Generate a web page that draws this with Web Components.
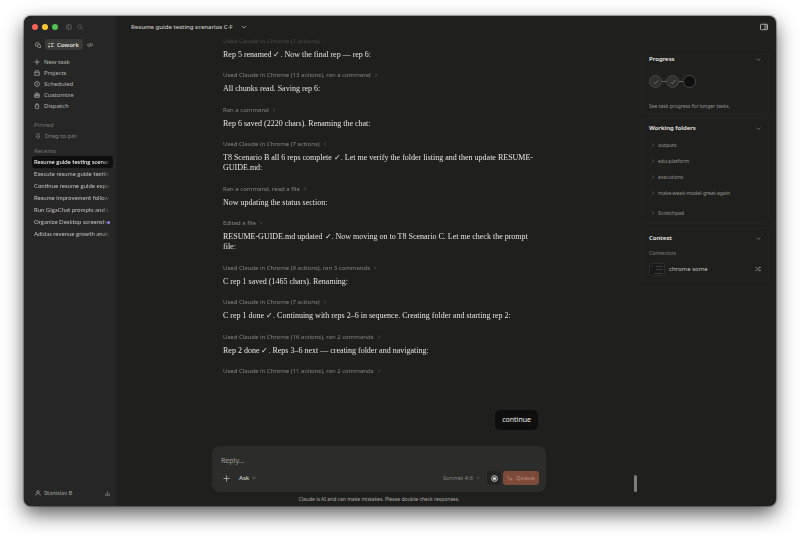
<!DOCTYPE html>
<html lang="en">
<head>
<meta charset="utf-8">
<meta name="viewport" content="width=device-width, initial-scale=1">
<title>Cowork</title>
<style>
    html, body {
        height: 100%;
        margin: 0;
    }
    body {
        box-sizing: border-box;
        padding: 16px 24px 32px;
        background: #fff;
        font-family: "Noto Sans", "Open Sans", sans-serif;
        font-size: 6px;
        line-height: 10px;
        color: #b8b6b0;
        overflow: hidden;
    }
</style>
</head>
<body>
<app-window>
    <side-bar slot="side">
        <nav-item icon="plus">New task</nav-item>
        <nav-item icon="box">Projects</nav-item>
        <nav-item icon="clock">Scheduled</nav-item>
        <nav-item icon="tools">Customize</nav-item>
        <nav-item icon="phone">Dispatch</nav-item>
        <recent-item slot="recents" active>Resume guide testing scenarios C-F</recent-item>
        <recent-item slot="recents">Execute resume guide testing</recent-item>
        <recent-item slot="recents">Continue resume guide experiments</recent-item>
        <recent-item slot="recents">Resume improvement follow-up</recent-item>
        <recent-item slot="recents">Run GigaChat prompts and save</recent-item>
        <recent-item slot="recents" unread>Organize Desktop screenshots</recent-item>
        <recent-item slot="recents">Adidas revenue growth analysis</recent-item>
    </side-bar>
    <title-bar slot="title">Resume guide testing scenarios C-F</title-bar>
    <chat-log>
        <chat-step action="Used Claude in Chrome (7 actions)">Rep 5 renamed ✓. Now the final rep — rep 6:</chat-step>
        <chat-step action="Used Claude in Chrome (13 actions), ran a command">All chunks read. Saving rep 6:</chat-step>
        <chat-step action="Ran a command">Rep 6 saved (2220 chars). Renaming the chat:</chat-step>
        <chat-step action="Used Claude in Chrome (7 actions)">T8 Scenario B all 6 reps complete ✓. Let me verify the folder listing and then update RESUME-GUIDE.md:</chat-step>
        <chat-step action="Ran a command, read a file">Now updating the status section:</chat-step>
        <chat-step action="Edited a file">RESUME-GUIDE.md updated ✓. Now moving on to T8 Scenario C. Let me check the prompt file:</chat-step>
        <chat-step action="Used Claude in Chrome (9 actions), ran 3 commands">C rep 1 saved (1465 chars). Renaming:</chat-step>
        <chat-step action="Used Claude in Chrome (7 actions)">C rep 1 done ✓. Continuing with reps 2–6 in sequence. Creating folder and starting rep 2:</chat-step>
        <chat-step action="Used Claude in Chrome (16 actions), ran 2 commands">Rep 2 done ✓. Reps 3–6 next — creating folder and navigating:</chat-step>
        <chat-step action="Used Claude in Chrome (11 actions), ran 2 commands"></chat-step>
        <span slot="reply">continue</span>
    </chat-log>
    <chat-composer></chat-composer>
    <info-panel slot="aside">
        <info-card heading="Progress"><progress-steps></progress-steps></info-card>
        <info-card heading="Working folders">
            <folder-list>
                <folder-row>outputs</folder-row>
                <folder-row>edu-platform</folder-row>
                <folder-row>executions</folder-row>
                <folder-row>make-weak-model-great-again</folder-row>
                <folder-row slot="scratch">Scratchpad</folder-row>
            </folder-list>
        </info-card>
        <info-card heading="Context"><connector-row>chrome some</connector-row></info-card>
    </info-panel>
</app-window>

<script>
// Shared button reset, each shadow root needs its own copy
const RESET = `
    * { box-sizing: border-box; }
    button {
        font: inherit;
        color: inherit;
        background: none;
        border: 0;
        margin: 0;
        padding: 0;
        text-align: left;
    }
`;

// All icons are drawn on a 16 unit grid
const ICONS = {
    plus: '<path d="M8 1v14M1 8h14"/>',
    box: '<path d="M2 6h12v8H2zM3 6l1-4h8l1 4"/>',
    clock: '<circle cx="8" cy="8" r="6.5"/><path d="M8 4.5V8l2.5 1.5"/>',
    tools: '<path d="M2 6h12v8H2zM5 6V3h6v3M2 10h12M6 9v2M10 9v2"/>',
    phone: '<rect x="3.5" y="4" width="9" height="11" rx="2"/><path d="M6 1.5h4M6.5 7.5h3"/>',
    pin: '<path d="M5 2h6v5l2 4H3l2-4zM6 14h4"/>',
    chats: '<path d="M4 10.5 1.5 11V6A4.5 4.5 0 0 1 6 1.5h1A4 4 0 0 1 11 5"/><path d="M10 6.5h1a3.8 3.8 0 0 1 3.5 4v4H10a4 4 0 0 1 0-8z"/>',
    tasks: '<path d="M1 4l1.5 1.5L5 2.5M8 4h7M8 12h7M8 8h5M1.5 10.5h3v3h-3z"/>',
    code: '<path d="M5 4 1 8l4 4M11 4l4 4-4 4M9.5 3l-3 10"/>',
    sidebar: '<rect x="1.5" y="2" width="13" height="12" rx="2"/><path d="M6 2v12"/>',
    search: '<circle cx="7" cy="7" r="5"/><path d="m11 11 4 4"/>',
    panel: '<rect x="1" y="2.5" width="14" height="11" rx="1.5"/><path d="M10 2.5v11M12 5.5h1.5M12 8h1.5M12 10.5h1.5"/>',
    down: '<path d="m2 5 6 6 6-6"/>',
    right: '<path d="m5 2 6 6-6 6"/>',
    user: '<circle cx="8" cy="5" r="3.5"/><path d="M2 15c0-3.5 2.5-6 6-6s6 2.5 6 6"/>',
    download: '<path d="M8 1.5V10M4.5 7 8 10.5 11.5 7M1.5 9v5h13V9"/>',
    stop: '<circle cx="8" cy="8" r="6.5"/><rect x="5" y="5" width="6" height="6" rx="1" fill="currentColor" stroke="none"/>',
    queue: '<path d="M3 1v6a4 4 0 0 0 4 4h7M10.5 7.5 14 11l-3.5 3.5"/>',
    check: '<path d="m2 9 4 4L14 3"/>',
    shuffle: '<path d="M1 4h3l6 8h5M1 12h3l6-8h5M12.5 1.5 15 4l-2.5 2.5M12.5 9.5 15 12l-2.5 2.5"/>'
};

// Helper: define an element with a static shadow template
function define(name, html, setup) {
    const template = document.createElement('template');
    template.innerHTML = html;
    customElements.define(name, class extends HTMLElement {
        constructor() {
            super();
            this.attachShadow({ mode: 'open' });
        }

        connectedCallback() {
            if (this.shadowRoot.firstChild) return;
            this.shadowRoot.appendChild(template.content.cloneNode(true));
            if (setup) setup(this, this.shadowRoot);
        }
    });
}

define('ui-icon', `
<style>
    :host {
        display: block;
        flex: none;
        width: 6px;
        height: 6px;
    }
    svg {
        display: block;
        width: 100%;
        height: 100%;
        fill: none;
        stroke: currentColor;
        stroke-width: 1.8;
    }
</style>
<svg viewBox="0 0 16 16" aria-hidden="true"></svg>
`, (el, root) => {
    root.querySelector('svg').innerHTML = ICONS[el.getAttribute('name')] || '';
});

define('app-window', `
<style>
    * { box-sizing: border-box; }
    :host {
        display: flex;
        height: 100%;
        border-radius: 7px;
        background: #1f1f1e;
        overflow: hidden;
        box-shadow: 0 0 1px 1px rgba(0, 0, 0, .35), 0 8px 20px rgba(0, 0, 0, .65);
    }
    .main {
        flex: 1;
        min-width: 0;
        display: flex;
        flex-direction: column;
    }
    .body {
        flex: 1;
        min-height: 0;
        display: flex;
    }
    .chat {
        flex: 1;
        min-width: 0;
        display: flex;
        flex-direction: column;
        align-items: center;
        position: relative;
    }
    /* overlay scrollbar */
    .thumb {
        position: absolute;
        right: 4px;
        bottom: 14px;
        width: 3px;
        height: 17px;
        border-radius: 2px;
        background: #7c7c7b;
    }
</style>
<slot name="side"></slot>
<div class="main">
    <slot name="title"></slot>
    <div class="body">
        <div class="chat"><slot></slot><div class="thumb"></div></div>
        <slot name="aside"></slot>
    </div>
</div>
`);

define('side-bar', `
<style>
    ${RESET}
    :host {
        display: flex;
        flex-direction: column;
        box-sizing: border-box;
        width: 93px;
        background: #262626;
        border-right: 1px solid #222221;
    }
    .lights {
        display: flex;
        align-items: center;
        gap: 4px;
        height: 22px;
        padding-left: 8px;
        color: #6b6b69;
    }
    .lights i {
        width: 6px;
        height: 6px;
        border-radius: 50%;
    }
    .red { background: #f9605a; }
    .yellow { background: #fbc934; }
    .green { background: #51c156; }
    .lights button + button { margin-left: 1px; }
    .lights i + button { margin-left: 4px; }
    .tabs {
        display: flex;
        align-items: center;
        gap: 4px;
        height: 13px;
        padding-left: 11px;
    }
    .tabs .on {
        display: flex;
        align-items: center;
        gap: 3px;
        height: 11px;
        padding: 0 4px 0 3px;
        border-radius: 3px;
        background: #3a3a39;
        color: #f0eee8;
        font-weight: 500;
    }
    nav { padding-top: 5px; }
    h2 {
        margin: 0;
        padding-left: 10px;
        font-size: 6px;
        line-height: 10px;
        font-weight: 400;
        color: #777672;
    }
    .pinned { margin-top: 9px; }
    .drag {
        display: flex;
        align-items: center;
        gap: 4px;
        height: 12px;
        margin-bottom: 4px;
        padding-left: 11px;
        color: #858480;
    }
    footer {
        display: flex;
        align-items: center;
        gap: 4px;
        margin-top: auto;
        padding: 0 6px 8px 11px;
        color: #a5a39d;
    }
    footer button:last-child { margin-left: auto; }
    .user {
        display: flex;
        align-items: center;
        gap: 3px;
        font-family: Lato, sans-serif;
    }
    .icon-5 { width: 5px; height: 5px; }
</style>
<div class="lights">
    <i class="red"></i><i class="yellow"></i><i class="green"></i>
    <button aria-label="Toggle sidebar"><ui-icon name="sidebar"></ui-icon></button>
    <button aria-label="Search"><ui-icon name="search"></ui-icon></button>
</div>
<div class="tabs">
    <button aria-label="Chat"><ui-icon name="chats"></ui-icon></button>
    <button class="on"><ui-icon name="tasks"></ui-icon>Cowork</button>
    <button aria-label="Code"><ui-icon name="code"></ui-icon></button>
</div>
<nav><slot></slot></nav>
<h2 class="pinned">Pinned</h2>
<div class="drag"><ui-icon name="pin"></ui-icon>Drag to pin</div>
<h2>Recents</h2>
<div><slot name="recents"></slot></div>
<footer>
    <button class="user"><ui-icon name="user"></ui-icon>Stanislav B</button>
    <button aria-label="Download"><ui-icon class="icon-5" name="download"></ui-icon></button>
</footer>
`);

define('nav-item', `
<style>
    ${RESET}
    :host { display: block; }
    button {
        display: flex;
        align-items: center;
        gap: 4px;
        width: 100%;
        height: 11px;
        padding-left: 10px;
    }
</style>
<button><ui-icon></ui-icon><slot></slot></button>
`, (el, root) => {
    root.querySelector('ui-icon').shadowRoot.querySelector('svg').innerHTML = ICONS[el.getAttribute('icon')];
});

define('recent-item', `
<style>
    :host {
        display: block;
        margin: 0 3px 0 8px;
        font-family: Lato, sans-serif;
    }
    a {
        display: flex;
        align-items: center;
        height: 12px;
        padding: 0 3px 0 2px;
        border-radius: 3px;
        color: #c2c0ba;
        text-decoration: none;
    }
    span {
        flex: 1;
        white-space: nowrap;
        overflow: hidden;
        -webkit-mask-image: linear-gradient(to left, transparent, #000 8px);
        mask-image: linear-gradient(to left, transparent, #000 8px);
    }
    :host([active]) a {
        background: #0f0f0f;
        color: #fff;
    }
    :host([unread]) a::after {
        content: "";
        width: 3px;
        height: 3px;
        border-radius: 50%;
        background: #8d86e0;
    }
    :host([unread]) span {
        -webkit-mask-image: linear-gradient(to left, transparent, #000 3px);
        mask-image: linear-gradient(to left, transparent, #000 3px);
    }
</style>
<a href="#"><span><slot></slot></span></a>
`);

define('title-bar', `
<style>
    ${RESET}
    :host {
        display: flex;
        align-items: center;
        justify-content: space-between;
        height: 22px;
        padding: 0 8px 0 14px;
        box-sizing: border-box;
    }
    .name {
        display: flex;
        align-items: center;
        gap: 8px;
        color: #cfcdc6;
        font-weight: 500;
    }
    .panel { width: 8px; height: 8px; }
</style>
<button class="name"><slot></slot><ui-icon name="down"></ui-icon></button>
<button aria-label="Toggle panel"><ui-icon class="panel" name="panel"></ui-icon></button>
`);

define('chat-log', `
<style>
    :host {
        flex: 1;
        min-height: 0;
        display: flex;
        flex-direction: column;
        box-sizing: border-box;
        width: 100%;
        max-width: 334px;
        margin-top: -2px;
        padding: 0 8px 16px 11px;
        -webkit-mask-image: linear-gradient(transparent 1px, #000 12px);
        mask-image: linear-gradient(transparent 1px, #000 12px);
    }
    .steps {
        flex: 1;
        display: flex;
        flex-direction: column;
        justify-content: space-between;
        padding-right: 3px;
    }
    .bubble {
        align-self: flex-end;
        margin-top: 34px;
        padding: 5px 7px;
        border-radius: 5px;
        background: #0e0e0e;
        color: #eeece6;
        font-size: 7px;
    }
</style>
<div class="steps"><slot></slot></div>
<div class="bubble"><slot name="reply"></slot></div>
`);

define('chat-step', `
<style>
    ${RESET}
    :host { display: block; }
    button {
        display: flex;
        align-items: center;
        gap: 3px;
        height: 10px;
        color: #878680;
    }
    ui-icon { width: 4px; height: 4px; }
    p {
        margin: 4px 0 0;
        font-family: "Liberation Serif", serif;
        font-size: 8px;
        line-height: 10px;
        color: #e6e4dd;
    }
</style>
<button><span></span><ui-icon name="right"></ui-icon></button>
<p><slot></slot></p>
`, (el, root) => {
    root.querySelector('span').textContent = el.getAttribute('action');
    // the running step has no message yet
    if (!el.textContent.trim()) root.querySelector('p').remove();
});

define('chat-composer', `
<style>
    ${RESET}
    :host {
        display: block;
        width: 100%;
        max-width: 334px;
    }
    form {
        height: 46px;
        padding: 8px 7px 8px 9px;
        border-radius: 8px;
        background: #2c2c2a;
    }
    input {
        display: block;
        width: 100%;
        height: 12px;
        padding: 0;
        border: 0;
        outline: 0;
        background: none;
        font: inherit;
        font-size: 7px;
        color: #eeece6;
    }
    input::placeholder { color: #a09e97; }
    .tools {
        display: flex;
        align-items: center;
        height: 14px;
        margin-top: 5px;
        padding-left: 2px;
    }
    .large {
        width: 7px;
        height: 7px;
    }
    .menu {
        display: flex;
        align-items: center;
        gap: 3px;
    }
    .menu ui-icon { width: 4px; height: 4px; }
    .ask {
        margin-left: 9px;
        font-weight: 500;
        color: #d0cec7;
    }
    .model {
        margin-left: auto;
        color: #85837d;
    }
    .stop {
        display: grid;
        place-items: center;
        width: 14px;
        height: 14px;
        margin: 0 2px 0 7px;
        border-radius: 3px;
        background: #232322;
        color: #f5f4ef;
    }
    .queue {
        display: flex;
        align-items: center;
        justify-content: center;
        gap: 3px;
        width: 36px;
        height: 14px;
        border-radius: 3px;
        background: #7d4a3a;
        color: #b98f80;
    }
    p {
        margin: 0;
        font-size: 5px;
        line-height: 14px;
        text-align: center;
        color: #b0aea8;
    }
</style>
<form>
    <input type="text" placeholder="Reply…" aria-label="Reply">
    <div class="tools">
        <button type="button" aria-label="Add"><ui-icon class="large" name="plus"></ui-icon></button>
        <button type="button" class="menu ask">Ask<ui-icon name="down"></ui-icon></button>
        <button type="button" class="menu model">Sonnet 4.6<ui-icon name="down"></ui-icon></button>
        <button type="button" class="stop" aria-label="Stop"><ui-icon class="large" name="stop"></ui-icon></button>
        <button type="button" class="queue"><ui-icon name="queue"></ui-icon>Queue</button>
    </div>
</form>
<p>Claude is AI and can make mistakes. Please double-check responses.</p>
`);

define('info-panel', `
<style>
    :host {
        display: flex;
        flex-direction: column;
        gap: 4px;
        width: 128px;
        margin: 11px 7px 0 0;
    }
</style>
<slot></slot>
`);

define('info-card', `
<style>
    ${RESET}
    :host {
        display: block;
        padding: 0 7px 2px;
        border: 1px solid #242423;
        border-radius: 4px;
    }
    button {
        display: flex;
        align-items: center;
        justify-content: space-between;
        width: 100%;
        height: 18px;
        font-weight: 600;
        color: #eeece6;
    }
    ui-icon { width: 5px; height: 5px; color: #a5a39d; }
</style>
<button><span></span><ui-icon name="down"></ui-icon></button>
<slot></slot>
`, (el, root) => {
    root.querySelector('span').textContent = el.getAttribute('heading');
});

define('progress-steps', `
<style>
    :host {
        display: block;
        padding: 7px 0 1px;
    }
    .steps {
        display: flex;
        align-items: center;
    }
    .dot {
        box-sizing: border-box;
        display: grid;
        place-items: center;
        width: 13px;
        height: 13px;
        border: 1px solid #464644;
        border-radius: 50%;
        background: #30302f;
        color: #85847f;
    }
    .dot.next { background: #0e0e0e; }
    .line {
        width: 4px;
        height: 1px;
        background: #6a6966;
    }
    p {
        margin: 14px 0 0;
        font-size: 5px;
        line-height: 8px;
        color: #96948e;
    }
</style>
<div class="steps">
    <div class="dot"><ui-icon name="check"></ui-icon></div>
    <div class="line"></div>
    <div class="dot"><ui-icon name="check"></ui-icon></div>
    <div class="line"></div>
    <div class="dot next"></div>
</div>
<p>See task progress for longer tasks.</p>
`);

define('folder-list', `
<style>
    :host { display: block; }
    .scratch { margin-top: 4px; }
</style>
<slot></slot>
<div class="scratch"><slot name="scratch"></slot></div>
`);

define('folder-row', `
<style>
    ${RESET}
    :host { display: block; }
    button {
        display: flex;
        align-items: center;
        gap: 3px;
        height: 16px;
        padding-left: 2px;
        font-size: 5px;
        color: #96948e;
    }
    ui-icon { width: 4px; height: 4px; }
</style>
<button><ui-icon name="right"></ui-icon><slot></slot></button>
`);

define('connector-row', `
<style>
    ${RESET}
    :host { display: block; }
    h3 {
        margin: 0;
        font-size: 5px;
        line-height: 12px;
        font-weight: 400;
        color: #85847f;
    }
    .row {
        display: flex;
        align-items: center;
        gap: 4px;
        height: 20px;
        color: #c6c4bd;
    }
    svg { width: 16px; height: 13px; }
    .row button { margin-left: auto; }
    .row ui-icon { color: #96948e; }
</style>
<h3>Connectors</h3>
<div class="row">
    <svg viewBox="0 0 16 13" aria-hidden="true">
        <rect x=".5" y=".5" width="15" height="12" rx="1" fill="#191919" stroke="#2d2d2c"/>
        <path d="M2 3h2M7 3.5h7M7 6.5h7M5 10.5h9" stroke="#3c3c3a"/>
    </svg>
    <slot></slot>
    <button aria-label="Manage connector"><ui-icon name="shuffle"></ui-icon></button>
</div>
`);
</script>
</body>
</html>
